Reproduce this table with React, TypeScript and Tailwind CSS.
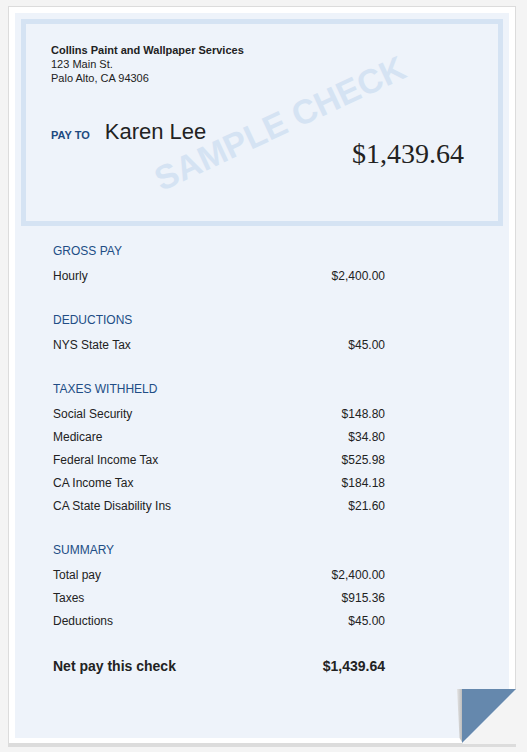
const SECTIONS = [
  { title: "GROSS PAY", rows: [["Hourly", "$2,400.00"]] },
  { title: "DEDUCTIONS", rows: [["NYS State Tax", "$45.00"]] },
  {
    title: "TAXES WITHHELD",
    rows: [
      ["Social Security", "$148.80"],
      ["Medicare", "$34.80"],
      ["Federal Income Tax", "$525.98"],
      ["CA Income Tax", "$184.18"],
      ["CA State Disability Ins", "$21.60"],
    ],
  },
  {
    title: "SUMMARY",
    rows: [
      ["Total pay", "$2,400.00"],
      ["Taxes", "$915.36"],
      ["Deductions", "$45.00"],
    ],
  },
];

const PageCurl = () => (
  <svg width="60" height="56" viewBox="0 0 60 56" className="absolute right-[-1px] bottom-[-1px]">
    <defs>
      <linearGradient id="curlShade" x1="0" x2="1" y1="0" y2="0">
        <stop offset="0" stopColor="#e4e4e4" />
        <stop offset="1" stopColor="#bdbdbd" />
      </linearGradient>
    </defs>
    <polygon points="60,0 60,56 6,56 60,1" fill="#f4f4f4" />
    <polygon points="1,1 6,1 6,54 3.5,50" fill="url(#curlShade)" />
    <polygon points="6,1 60,1 6,55" fill="#6588ad" />
  </svg>
);

export default function App() {
  return (
    <div
      className="min-h-[752px] w-[527px] bg-[#f4f4f4] pt-[6px] pl-[8px] text-[#222]"
      style={{ fontFamily: '"Liberation Sans", Arial, sans-serif' }}
    >
      <div className="relative w-[508px] border border-b-4 border-[#dcdcdc] bg-white p-[6px] pb-[5px]">
        <div className="h-[725px] bg-[#eef3fa] px-[6px] pt-[6px]">
          {/* Check */}
          <div className="relative h-[207px] overflow-hidden border-[5px] border-[#d5e3f3] pl-[25px] pr-[34px] pt-[19px]">
            <div className="pointer-events-none absolute inset-0 flex items-center justify-center">
              <span className="translate-x-[18px] translate-y-[1px] -rotate-[25deg] text-[34px] font-bold whitespace-nowrap text-[#d5e3f3]">
                SAMPLE CHECK
              </span>
            </div>
            <div className="relative text-[11px] leading-[14px]">
              <div className="font-bold">Collins Paint and Wallpaper Services</div>
              <div>123 Main St.</div>
              <div>Palo Alto, CA 94306</div>
            </div>
            <div className="relative mt-[36px] flex items-start justify-between">
              <div className="flex items-baseline gap-[15px]">
                <span className="text-[11px] font-bold text-[#1d4a80]">PAY TO</span>
                <span className="text-[22px] leading-[22px]">Karen Lee</span>
              </div>
              <span
                className="mt-[19px] text-[28px] leading-[28px]"
                style={{ fontFamily: '"Liberation Serif", "Times New Roman", serif' }}
              >
                $1,439.64
              </span>
            </div>
          </div>

          {/* Stub */}
          <div className="mt-[13px] w-[364px] pl-[32px] text-[12px]">
            {SECTIONS.map((section, i) => (
              <div key={section.title} className={i > 0 ? "mt-[21px]" : ""}>
                <div className="mb-[2px] flex h-[23px] items-center text-[#214d85]">{section.title}</div>
                {section.rows.map(([label, amount]) => (
                  <div key={label} className="flex h-[23px] items-center justify-between">
                    <span>{label}</span>
                    <span>{amount}</span>
                  </div>
                ))}
              </div>
            ))}
            <div className="mt-[23px] flex h-[23px] items-center justify-between text-[14px] font-bold">
              <span>Net pay this check</span>
              <span>$1,439.64</span>
            </div>
          </div>
        </div>
        <PageCurl />
      </div>
    </div>
  );
}
